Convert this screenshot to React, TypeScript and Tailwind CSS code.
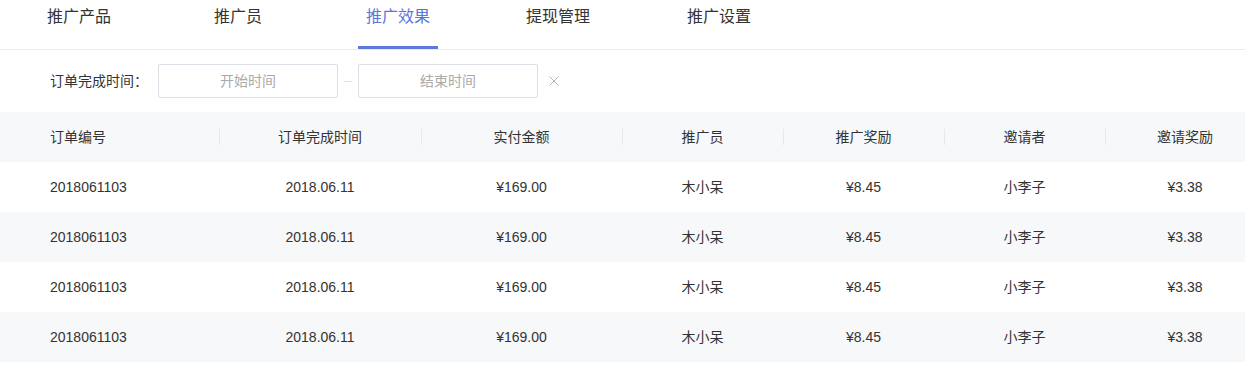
import React from 'react';

const tabs = [
  { label: '推广产品', cls: 'ml-[39px] w-[80px]' },
  { label: '推广员', cls: 'ml-[87px] w-[64px]' },
  { label: '推广效果', cls: 'ml-[88px] w-[80px]', active: true },
  { label: '提现管理', cls: 'ml-[80px] w-[80px]' },
  { label: '推广设置', cls: 'ml-[81px] w-[80px]' },
];

const columns = [
  { title: '订单编号', cls: 'w-[219px] justify-start pl-[50px]' },
  { title: '订单完成时间', cls: 'w-[202px] justify-center' },
  { title: '实付金额', cls: 'w-[201px] justify-center' },
  { title: '推广员', cls: 'w-[161px] justify-center' },
  { title: '推广奖励', cls: 'w-[161px] justify-center' },
  { title: '邀请者', cls: 'w-[161px] justify-center' },
  { title: '邀请奖励', cls: 'w-[160px] justify-center' },
];

const rows = [
  ['2018061103', '2018.06.11', '¥169.00', '木小呆', '¥8.45', '小李子', '¥3.38'],
  ['2018061103', '2018.06.11', '¥169.00', '木小呆', '¥8.45', '小李子', '¥3.38'],
  ['2018061103', '2018.06.11', '¥169.00', '木小呆', '¥8.45', '小李子', '¥3.38'],
  ['2018061103', '2018.06.11', '¥169.00', '木小呆', '¥8.45', '小李子', '¥3.38'],
];

const App: React.FC = () => {
  return (
    <div
      className="w-full min-h-screen bg-white overflow-hidden text-[#333]"
      style={{ fontFamily: '"Liberation Sans", "Noto Sans CJK SC", sans-serif' }}
    >
      {/* tab bar */}
      <div className="flex h-[50px] border-b border-[#ebebeb]">
        {tabs.map((tab) => (
          <div
            key={tab.label}
            className={`relative h-[49px] pt-[5px] text-center text-[16px] leading-6 ${tab.cls} ${
              tab.active ? 'text-[#5a76da]' : 'text-[#333]'
            }`}
          >
            {tab.label}
            {tab.active && (
              <div className="absolute left-0 right-0 bottom-0 h-[3px] bg-[#5b78dc]" />
            )}
          </div>
        ))}
      </div>

      {/* filter */}
      <div className="flex items-center mt-[14px] h-[34px] text-[14px]">
        <span className="ml-[50px] w-[108px]">订单完成时间：</span>
        <div className="w-[180px] h-[34px] border border-[#dcdfe6] rounded-[2px] flex items-center justify-center text-[#aaa]">
          开始时间
        </div>
        <div className="w-[8px] h-px bg-[#e0e0e0] mx-[6px]" />
        <div className="w-[180px] h-[34px] border border-[#dcdfe6] rounded-[2px] flex items-center justify-center text-[#aaa]">
          结束时间
        </div>
        <svg className="ml-[11px]" width="10" height="10" viewBox="0 0 10 10">
          <path d="M0.5 0.5 L9.5 9.5 M9.5 0.5 L0.5 9.5" stroke="#b5b5b5" strokeWidth="1" fill="none" />
        </svg>
      </div>

      {/* table */}
      <div className="mt-[14px] w-[1265px] text-[14px]">
        <div className="flex h-[50px] bg-[#f7f8fa]">
          {columns.map((col, i) => (
            <div key={col.title} className={`relative flex items-center h-full ${col.cls}`}>
              {i > 0 && <div className="absolute left-0 top-[17px] h-[16px] w-px bg-[#e6e8eb]" />}
              {col.title}
            </div>
          ))}
        </div>
        {rows.map((row, r) => (
          <div key={r} className={`flex h-[50px] ${r % 2 === 1 ? 'bg-[#f7f8fa]' : 'bg-white'}`}>
            {row.map((cell, i) => (
              <div key={i} className={`flex items-center h-full ${columns[i].cls}`}>
                {cell}
              </div>
            ))}
          </div>
        ))}
      </div>
    </div>
  );
};

export default App;
